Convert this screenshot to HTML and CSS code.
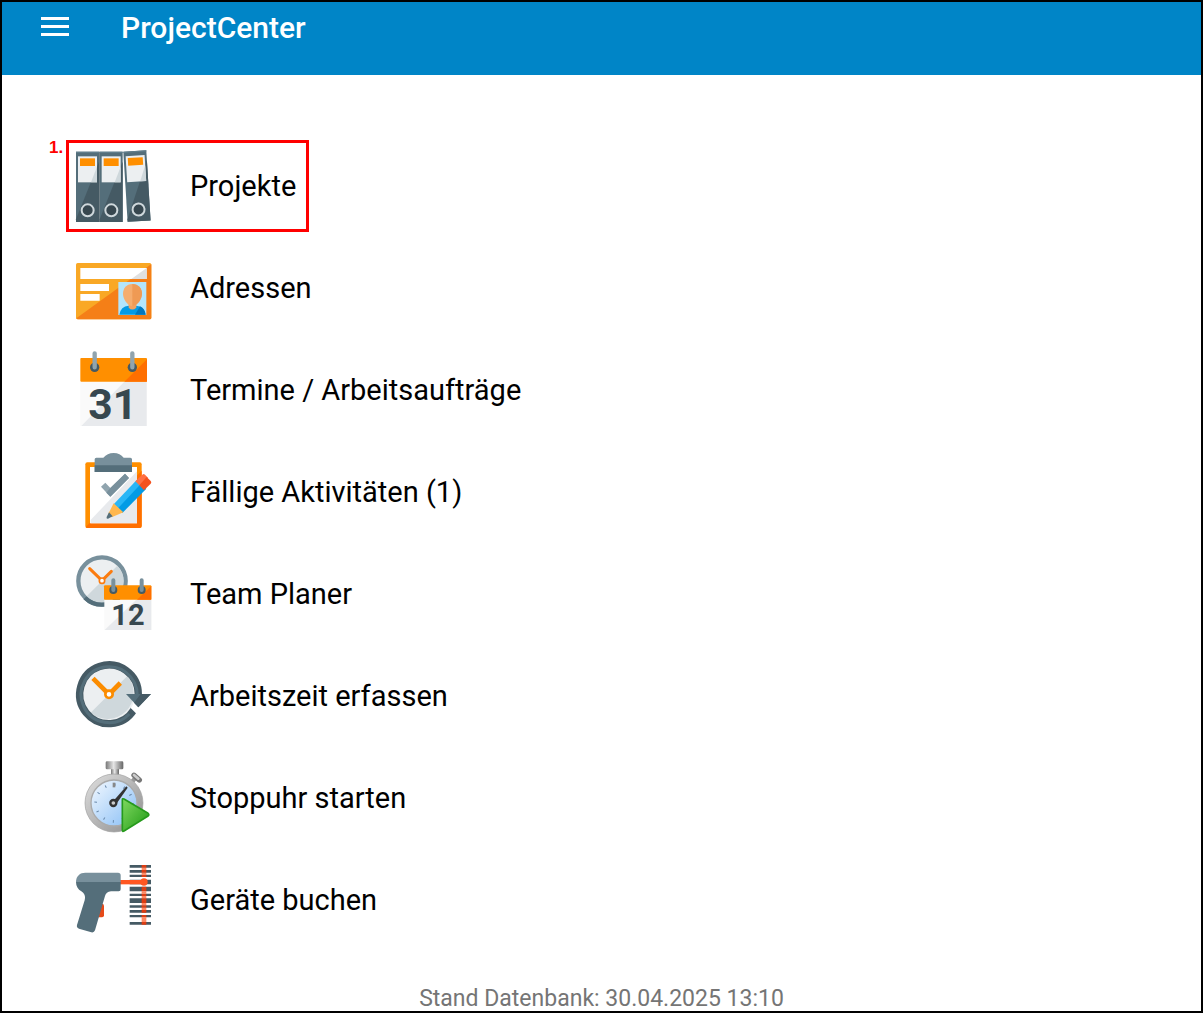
FILE: index.html
```html
<!DOCTYPE html>
<html lang="de">
<head>
    <meta charset="UTF-8">
    <meta name="viewport" content="width=device-width, initial-scale=1.0">
    <title>ProjectCenter</title>
    <link rel="stylesheet" href="styles.css">
</head>
<body>
    <header class="topbar">
        <button class="menu-button" type="button" aria-label="Menü">
            <svg width="28" height="20" viewBox="0 0 28 20" fill="#fff">
                <path d="M0 0h28v3H0zM0 8h28v3H0zM0 16h28v3H0z"/>
            </svg>
        </button>
        <h1 class="title">ProjectCenter</h1>
    </header>

    <main class="content">
        <ul class="menu">
            <li>
                <a class="menu-item marked" href="#projekte">
                    <span class="step">1.</span>
                    <!-- Folders -->
                    <svg class="icon" viewBox="108 51 228 228">
                        <defs>
                            <g id="folder">
                                <path fill="#546e7a" d="M0 0h69v211H0z"/>
                                <path fill="#455a64" d="M69 30v181H0v-8z"/>
                                <path fill="#607d8b" d="M0 0h69v4H0z"/>
                                <path fill="#eceff1" d="M6 14h57v78H6z"/>
                                <path fill="#cfd8dc" d="M63 45v47H45z"/>
                                <path fill="#ff8f00" d="M12 20h45v23H12z"/>
                                <circle cx="35" cy="176" r="18" fill="#37474f" stroke="#cfd8dc" stroke-width="6"/>
                            </g>
                        </defs>
                        <use href="#folder" x="108" y="65"/>
                        <path fill="#37474f" d="M177 65h2v211h-2z"/>
                        <use href="#folder" x="179" y="65"/>
                        <use href="#folder" transform="translate(250 65) rotate(-3.5)"/>
                    </svg>
                    <span class="label">Projekte</span>
                </a>
            </li>
            <li>
                <a class="menu-item" href="#adressen">
                    <!-- Address card -->
                    <svg class="icon" viewBox="30 -3 228 228">
                        <rect x="30" y="39" width="226" height="169" rx="5" fill="#f9a825"/>
                        <path fill="#f57f17" d="M256 42v161q0 5-5 5H35l-4-3z"/>
                        <path fill="#fff" d="M43 54h199v33H43zM43 102h86v21H43zM43 132h58v20H43z"/>
                        <path fill="#e0e0e0" d="M242 54v33h-46z"/>
                        <path fill="#b3e5fc" d="M157 96h84v99h-84z"/>
                        <path fill="#039be5" d="M160 194q4-25 28-27h22q25 2 29 27z"/>
                        <path fill="#0277bd" d="M222 169q14 6 17 25h-32z"/>
                        <path fill="#f2a15f" d="M188 160h23v13q-12 11-23 0z"/>
                        <path fill="#f5ad6e" d="M199 102c-18 0-28 13-28 29s14 37 28 37 29-21 29-37-11-29-29-29z"/>
                        <path fill="#ef9a54" d="M199 102c18 0 29 13 29 29s-15 37-29 37z"/>
                    </svg>
                    <span class="label">Adressen</span>
                </a>
            </li>
            <li>
                <a class="menu-item" href="#termine">
                    <!-- Calendar -->
                    <svg class="icon" viewBox="30 27 228 228">
                        <path fill="#fafafa" d="M43 119h199v133H43z"/>
                        <path fill="#e8eaed" d="M175 119h67v133H46z"/>
                        <rect x="43" y="48" width="200" height="71" rx="3" fill="#ff8f00"/>
                        <path fill="#ff6f00" d="M243 52v67h-68z"/>
                        <circle cx="86" cy="76" r="14" fill="#455a64"/>
                        <circle cx="199" cy="76" r="14" fill="#455a64"/>
                        <path stroke="#90a4ae" stroke-width="13" stroke-linecap="round" d="M86 34v42M199 34v42"/>
                        <text class="day" x="140" y="231" font-size="128">31</text>
                    </svg>
                    <span class="label">Termine / Arbeitsaufträge</span>
                </a>
            </li>
            <li>
                <a class="menu-item" href="#aktivitaeten">
                    <!-- Clipboard with pencil -->
                    <svg class="icon" viewBox="30 27 228 228">
                        <rect x="58" y="55" width="169" height="197" rx="6" fill="#ff8f00"/>
                        <path fill="#ff6f00" d="M227 80v166q0 6-6 6H64q-4 0-5-3z"/>
                        <path fill="#fff" d="M72 69h141v169H72z"/>
                        <path fill="#e8eaed" d="M213 82v156H74v-10z"/>
                        <path fill="#78909c" d="M91 41h21c8-9 18-14 31-14s23 5 30 14h20q5 0 5 5v38H86V46q0-5 5-5z"/>
                        <path fill="#546e7a" d="M86 64h112v20H86z"/>
                        <path fill="#90a4ae" d="M105 128l13-12 15 16 44-43 12 13-56 56z"/>
                        <path fill="#78909c" d="M133 132l44-43 12 13-56 56-12-12z"/>
                        <path fill="#29b6f6" d="M143 181l69-73 15 14-68 72z"/>
                        <path fill="#039be5" d="M156 193l69-74 16 15-72 73z"/>
                        <path fill="#ff7043" d="M208 112l21-20q4-4 8 0l9 9-26 23z"/>
                        <path fill="#f4511e" d="M220 124l22-25 12 12q4 4 0 8l-20 20z"/>
                        <path fill="#ffb74d" d="M143 178l29 27-35 15-10-11z"/>
                        <path fill="#546e7a" d="M129 205l11 12-14 7q-6 1-4-5z"/>
                    </svg>
                    <span class="label">Fällige Aktivitäten (1)</span>
                </a>
            </li>
            <li>
                <a class="menu-item" href="#teamplaner">
                    <!-- Clock and calendar -->
                    <svg class="icon" viewBox="30 27 228 228">
                        <circle cx="108" cy="105" r="71" fill="#eceff1" stroke="#78909c" stroke-width="13"/>
                        <path fill="#cfd8dc" d="M154 59a65 65 0 0 1-92 92z"/>
                        <path fill="none" stroke="#546e7a" stroke-width="13" d="M57 155A71 71 0 0 0 158 155"/>
                        <path fill="none" stroke="#fb7c10" stroke-width="9" stroke-linecap="round" d="M71 68l37 36 28-28"/>
                        <circle cx="108" cy="104" r="8" fill="#fff" stroke="#fb7c10" stroke-width="5"/>
                        <path fill="#fafafa" d="M115 161h141v91H115z"/>
                        <path fill="#e8eaed" d="M211 161h45v91H116z"/>
                        <rect x="114" y="118" width="142" height="43" rx="3" fill="#ff8f00"/>
                        <path fill="#ff6f00" d="M256 120v41h-43z"/>
                        <circle cx="142" cy="132" r="12" fill="#455a64"/>
                        <circle cx="227" cy="132" r="12" fill="#455a64"/>
                        <path stroke="#78909c" stroke-width="12" stroke-linecap="round" d="M142 103v29M227 103v29"/>
                        <text class="day" x="186" y="238" font-size="87">12</text>
                    </svg>
                    <span class="label">Team Planer</span>
                </a>
            </li>
            <li>
                <a class="menu-item" href="#arbeitszeit">
                    <!-- Clock with arrow -->
                    <svg class="icon" viewBox="30 21 228 228">
                        <circle cx="129" cy="133" r="78" fill="#eceff1"/>
                        <path fill="#cfd8dc" d="M184 78a78 78 0 0 1-110 110z"/>
                        <path fill="none" stroke="#455a64" stroke-width="22" d="M204 179A88 88 0 1 1 217 134"/>
                        <path fill="none" stroke="#546e7a" stroke-width="9" d="M210 157A84 84 0 1 0 190 192"/>
                        <path fill="#fff" d="M194 174l17-10 18 16-17 12z"/>
                        <path fill="#546e7a" d="M180 132h75l-38 40z"/>
                        <path fill="#455a64" d="M255 132l-38 40-13-14 20-26z"/>
                        <path fill="none" stroke="#fb8c00" stroke-width="14" d="M81 85l48 48 34-34"/>
                        <circle cx="129" cy="133" r="11" fill="#fff" stroke="#fb8c00" stroke-width="8"/>
                    </svg>
                    <span class="label">Arbeitszeit erfassen</span>
                </a>
            </li>
            <li>
                <a class="menu-item" href="#stoppuhr">
                    <!-- Stopwatch -->
                    <svg class="icon" viewBox="30 21 228 228">
                        <defs>
                            <linearGradient id="metal" x1="0" y1="0" x2="1" y2="1">
                                <stop offset="0" stop-color="#e0e0e0"/>
                                <stop offset="1" stop-color="#8c8c8c"/>
                            </linearGradient>
                            <linearGradient id="dial" x1="0" y1="0" x2="1" y2="1">
                                <stop offset="0" stop-color="#f4f9ff"/>
                                <stop offset="1" stop-color="#86bdf5"/>
                            </linearGradient>
                            <linearGradient id="play" x1="0" y1="0" x2="1" y2="1">
                                <stop offset="0" stop-color="#7fd860"/>
                                <stop offset="1" stop-color="#1f9a14"/>
                            </linearGradient>
                            <linearGradient id="knob">
                                <stop offset="0" stop-color="#777"/>
                                <stop offset=".45" stop-color="#e6e6e6"/>
                                <stop offset="1" stop-color="#666"/>
                            </linearGradient>
                        </defs>
                        <path fill="url(#knob)" d="M135 45h24v26h-24z"/>
                        <rect x="119" y="28" width="53" height="24" rx="4" fill="url(#knob)"/>
                        <path stroke="#999" stroke-width="13" d="M191 98l16-19"/>
                        <path stroke="#777" stroke-width="16" stroke-linecap="round" d="M204 70l16 14"/>
                        <path stroke="#ccc" stroke-width="8" stroke-linecap="round" d="M204 69l13 11"/>
                        <circle cx="144" cy="153" r="87" fill="url(#metal)" stroke="#a0a0a0" stroke-width="2"/>
                        <circle cx="144" cy="153" r="69" fill="url(#dial)" stroke="#aaa" stroke-width="4"/>
                        <circle cx="144" cy="153" r="55" fill="none" stroke="#6888aa" stroke-width="8" stroke-dasharray="3 25.8"/>
                        <path stroke="#888" stroke-width="8" d="M144 92v14"/>
                        <path fill="#333" d="M144 145l37-42 4 4-32 46z"/>
                        <circle cx="142" cy="153" r="9" fill="#ccc" stroke="#333" stroke-width="7"/>
                        <path fill="url(#play)" stroke="#269a1c" stroke-width="5" stroke-linejoin="round" d="M169 143q0-4 5-2l71 42q7 5 0 10l-71 44q-5 3-5-3z"/>
                    </svg>
                    <span class="label">Stoppuhr starten</span>
                </a>
            </li>
            <li>
                <a class="menu-item" href="#geraete">
                    <!-- Barcode scanner -->
                    <svg class="icon" viewBox="30 15 228 228">
                        <path fill="#455a64" d="M191 27h64v8h-64zM191 42h64v8h-64zM191 56h64v7h-64zM191 71h64v14h-64zM191 92h64v14h-64zM191 113h64v7h-64zM191 127h64v14h-64zM191 148h64v7h-64zM191 162h64v8h-64zM191 177h64v7h-64zM191 198h64v8h-64z"/>
                        <path fill="#dd3d12" d="M227 27h14v8h-14zM227 42h14v8h-14zM227 56h14v7h-14zM227 92h14v14h-14zM227 113h14v7h-14zM227 127h14v14h-14zM227 148h14v7h-14zM227 162h14v8h-14zM227 177h14v7h-14zM227 198h14v8h-14z"/>
                        <path fill="#ff8a65" d="M227 35h14v7h-14zM227 50h14v6h-14zM227 106h14v7h-14zM227 120h14v7h-14zM227 141h14v7h-14zM227 155h14v7h-14zM227 184h14v14h-14z"/>
                        <path fill="#ff5722" d="M160 72h74v13h-74z"/>
                        <circle cx="234" cy="78" r="11" fill="#ff5722"/>
                        <path fill="#e64a19" d="M107 143q7 0 7 7v28q0 6-6 6H94z"/>
                        <path fill="#546e7a" d="M30 78h134v22q0 6-6 6h-23c-10 0-16 7-18 14L87 223q-3 8-11 6l-37-11q-8-3-6-11l23-74c4-14-2-21-10-27-10-6-16-15-16-28z"/>
                        <path fill="#78909c" d="M58 50h98q8 0 8 8v20H30c0-18 12-28 28-28z"/>
                    </svg>
                    <span class="label">Geräte buchen</span>
                </a>
            </li>
        </ul>
    </main>

    <footer class="status">Stand Datenbank: 30.04.2025 13:10</footer>
</body>
</html>
```
FILE: styles.css
```css
* {
    box-sizing: border-box;
}

body {
    margin: 0;
    min-height: 100vh;
    display: flex;
    flex-direction: column;
    border: 2px solid #000;
    background: #fff;
    color: #000;
    font-family: Roboto, sans-serif;
}

.topbar {
    display: flex;
    align-items: flex-start;
    gap: 52px;
    height: 73px;
    padding: 8px 39px;
    background: #0085c7;
    color: #fff;
}

.menu-button {
    display: flex;
    padding: 7px 0;
    border: none;
    background: none;
    cursor: pointer;
}

.title {
    margin: 0;
    font-size: 30px;
    font-weight: 500;
    line-height: 36px;
}

.content {
    flex: 1;
    padding: 65px 64px 0;
}

.menu {
    display: flex;
    flex-direction: column;
    gap: 10px;
    margin: 0;
    padding: 0;
    list-style: none;
}

.menu li {
    display: flex;
}

.menu-item {
    position: relative;
    display: flex;
    align-items: center;
    gap: 38px;
    padding: 4px 10px 6px 7px;
    border: 3px solid transparent;
    color: #000;
    font-size: 29px;
    line-height: 36px;
    text-decoration: none;
}

.label {
    padding-top: 2px;
}

.marked {
    border-color: #f00;
}

/* step number next to the red frame */
.step {
    position: absolute;
    top: -5px;
    left: -20px;
    color: #f00;
    font-family: "Liberation Sans", Arial, sans-serif;
    font-size: 17px;
    font-weight: bold;
    line-height: 20px;
}

.icon {
    width: 76px;
    height: 76px;
    overflow: visible;
}

.day {
    fill: #37474f;
    font-family: Roboto, sans-serif;
    font-weight: bold;
    text-anchor: middle;
}

.status {
    color: #757575;
    font-size: 23px;
    line-height: 24px;
    text-align: center;
}
```
